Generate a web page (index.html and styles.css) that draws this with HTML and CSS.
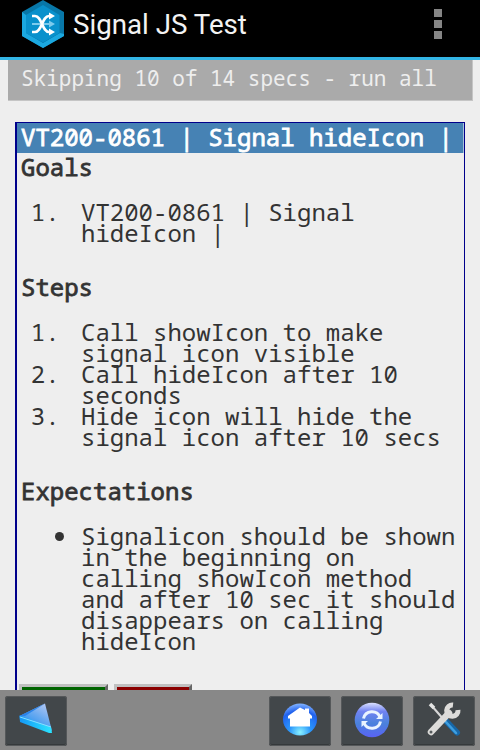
FILE: index.html
```html
<!DOCTYPE html>
<html lang="en">
<head>
<meta charset="utf-8">
<title>Signal JS Test</title>
<link rel="stylesheet" href="styles.css">
</head>
<body>
<header class="appbar">
  <svg class="logo" width="42" height="48" viewBox="0 0 42 48">
    <path fill="#0877a8" d="M21 0 42 12V36L21 48 0 36V12Z"/>
    <path fill="#1ba8e0" d="M0 12 4 15V33L21 43 38 33 42 34V36L21 48 0 36Z"/>
    <path fill="#0991cc" d="M21 5 37.500 15V33L21 42.500 4 33V15Z"/>
    <path fill="none" stroke="#7ccbed" stroke-width="2" d="M10 24H29"/>
    <path fill="#7ccbed" d="M27 20.500 33 24 27 27.500Z"/>
    <path fill="none" stroke="#fff" stroke-width="2.700" d="M10 16H13C20 16 20 32 27 32H29M10 32H13C20 32 20 16 27 16H29"/>
    <path fill="#fff" d="M27 12.500 33 16 27 19.500ZM27 28.500 33 32 27 35.500Z"/>
  </svg>
  <h1 class="app-title">Signal JS Test</h1>
  <div class="overflow"><i></i><i></i><i></i></div>
</header>
<main class="page">
  <div class="skipped">Skipping 10 of 14 specs - run all</div>
  <section class="spec">
    <h2 class="spec-title">VT200-0861 | Signal hideIcon |</h2>
    <h3>Goals</h3>
    <ol>
      <li>VT200-0861 | Signal<br>hideIcon |</li>
    </ol>
    <h3>Steps</h3>
    <ol>
      <li>Call showIcon to make<br>signal icon visible</li>
      <li>Call hideIcon after 10<br>seconds</li>
      <li>Hide icon will hide the<br>signal icon after 10 secs</li>
    </ol>
    <h3>Expectations</h3>
    <ul>
      <li>Signalicon should be shown<br>in the beginning on<br>calling showIcon method<br>and after 10 sec it should<br>disappears on calling<br>hideIcon</li>
    </ul>
    <div class="results"><button class="pass" aria-label="Pass"></button><button class="fail" aria-label="Fail"></button></div>
  </section>
</main>
<nav class="toolbar">
  <button class="tool back" aria-label="Back">
    <svg width="62" height="50" viewBox="0 0 62 50">
      <defs>
        <linearGradient id="tri" x1="1" y1="0" x2=".3" y2="1"><stop offset="0" stop-color="#c3cdf2"/><stop offset=".5" stop-color="#69aaf0"/><stop offset="1" stop-color="#168cf0"/></linearGradient>
        <linearGradient id="edge"><stop offset="0" stop-color="#1597f5"/><stop offset="1" stop-color="#2be5ff"/></linearGradient>
      </defs>
      <path fill="url(#tri)" d="M40 7.500 14.500 20 15 24 47 35Z"/>
      <path fill="#2a83ea" d="M40 7.500 14.500 20 20 20Z"/>
      <path fill="url(#edge)" d="M14.500 19.500 46 31 47 37 44 37 15 26Z"/>
      <path fill="none" stroke="#8bdcff" d="M15 21 46 31"/>
    </svg>
  </button>
  <button class="tool" aria-label="Home">
    <svg width="62" height="50" viewBox="0 0 62 50">
      <defs><radialGradient id="home" cx=".5" cy=".9" r=".9"><stop offset="0" stop-color="#8bf3ff"/><stop offset=".35" stop-color="#2b97fb"/><stop offset=".75" stop-color="#2162ee"/><stop offset="1" stop-color="#83b4ff"/></radialGradient></defs>
      <ellipse cx="31" cy="23.500" rx="17" ry="16" fill="url(#home)"/>
      <path fill="#fff" d="M31 11.500 36 14V12.500H40V17L43 20V22.500H41V30.500H21V22.500H19V20Z"/>
    </svg>
  </button>
  <button class="tool" aria-label="Refresh">
    <svg width="62" height="50" viewBox="0 0 62 50">
      <defs><linearGradient id="sync" x2="0" y2="1"><stop offset="0" stop-color="#dce2ff"/><stop offset=".25" stop-color="#7183f2"/><stop offset=".6" stop-color="#4a82dc"/><stop offset="1" stop-color="#5962f5"/></linearGradient></defs>
      <circle cx="31" cy="24" r="17.300" fill="url(#sync)"/>
      <path fill="none" stroke="#e9f4ff" stroke-width="3" d="M22.500 22.500A8.700 8.700 0 0 1 39 21M39.500 25.500A8.700 8.700 0 0 1 23 27"/>
      <path fill="#e9f4ff" d="M41.500 17V23H35ZM20.500 31V25H27Z"/>
    </svg>
  </button>
  <button class="tool" aria-label="Settings">
    <svg width="62" height="50" viewBox="0 0 62 50">
      <path stroke="#d8d8d8" stroke-width="2" d="M18 9 32 25"/>
      <path stroke="#e4e4e4" stroke-width="3.500" d="M17 8 21 12"/>
      <path stroke="#1767a8" stroke-width="6" stroke-linecap="round" d="M33 25 44 36.500"/>
      <path stroke="#3e9fe0" stroke-width="2.500" stroke-linecap="round" d="M33 26 43 37"/>
      <path stroke="#dddcda" stroke-width="6.500" stroke-linecap="round" d="M18 36 36 17"/>
      <path fill="none" stroke="#dddcda" stroke-width="5" d="M40 9A5.700 5.700 0 1 0 45 14"/>
      <circle cx="18" cy="36" r="1.500" fill="#555b5d"/>
    </svg>
  </button>
</nav>
</body>
</html>
```
FILE: styles.css
```css
* { box-sizing: border-box; }
body {
  margin: 0;
  height: 750px;
  overflow: hidden;
  display: flex;
  flex-direction: column;
  background: #eee;
  color: #333;
  font-family: "Droid Sans Mono", "Noto Sans Mono", "DejaVu Sans Mono", monospace;
}
h1, h2, h3, ol, ul { margin: 0; padding: 0; font-size: inherit; }
.appbar {
  flex: none;
  height: 60px;
  padding: 0 38px 0 22px;
  display: flex;
  align-items: flex-start;
  background: #000;
  border-bottom: 3px solid #33b5e5;
}
.logo { flex: none; }
.app-title {
  margin-left: 9px;
  color: #f3f3f3;
  font: 400 27.700px/50px Roboto, sans-serif;
  white-space: nowrap;
}
.overflow {
  margin: 9px 0 0 auto;
  display: flex;
  flex-direction: column;
  gap: 3px;
}
.overflow i { width: 8px; height: 8px; background: #858585; }
.page { flex: 1; min-height: 0; overflow: hidden; }
.skipped {
  margin: 0 7px 0 8px;
  height: 41px;
  padding-left: 13px;
  background: #aaa;
  border: solid #c5c5c5;
  border-width: 0 1px 1px 0;
  color: #eee;
  font-size: 21px;
  line-height: 37px;
  white-space: pre;
}
.spec {
  margin: 21px 15px 0;
  height: 620px;
  border: 1px solid #00008b;
  border-left-width: 2px;
  font-size: 24px;
  line-height: 21px;
  white-space: nowrap;
}
.spec-title {
  height: 30px;
  padding-left: 4px;
  background: #4682b4;
  border-right: 1px solid #a9c4dc;
  color: #fff;
  line-height: 27px;
}
.spec-title, h3 { font-weight: 400; -webkit-text-stroke: .8px currentColor; }
h3 { padding: 3px 0 0 4px; }
ol, ul { margin: 24px 0 30px; }
ol { padding-left: 57px; }
ol li { padding-left: 7px; }
ul { padding-left: 62px; }
ul li { padding-left: 2px; }
.results { display: flex; gap: 6px; margin-top: 33px; padding-left: 2px; }
.results button {
  height: 40px;
  padding: 0;
  border: 3px solid;
  border-color: #c0c0c0 #666 #666 #c0c0c0;
}
.pass { width: 89px; background: #006400; }
.fail { width: 78px; background: #8b0000; }
.toolbar {
  flex: none;
  height: 60px;
  padding: 6px 5px;
  display: flex;
  align-items: flex-start;
  gap: 10px;
  background: #888;
}
.tool {
  width: 62px;
  height: 50px;
  padding: 0;
  border: 0;
  border-radius: 3px;
  background: #42474a;
  box-shadow: inset 0 0 0 1px #55585a, inset 0 -2px #35393b;
}
.tool svg { display: block; }
.back { margin-right: auto; }
```
